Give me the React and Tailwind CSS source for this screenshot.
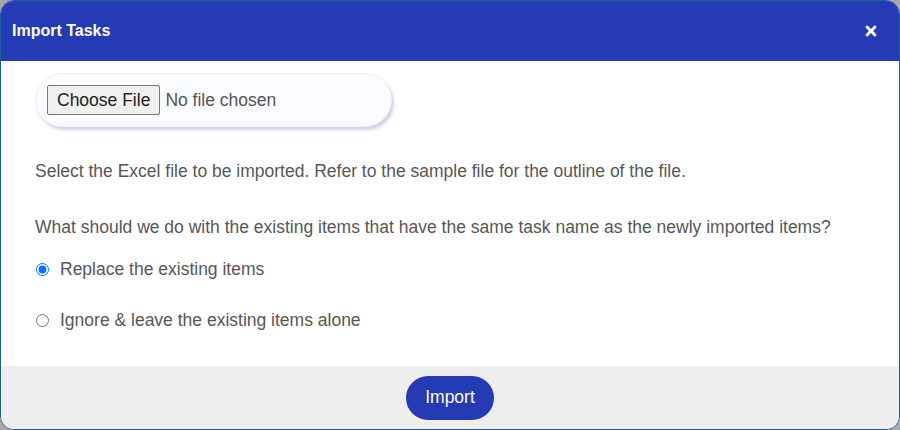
import React from "react";
import { FaTimes } from "react-icons/fa";

const App = () => {
  return (
    <div className="w-[900px] h-[430px] bg-[#a8a8a8]" style={{ fontFamily: '"Liberation Sans", Arial, sans-serif' }}>
      <div className="w-full h-full flex flex-col bg-white rounded-[14px] border border-[#1d5e9c] overflow-hidden">
        {/* header */}
        <div className="h-[60px] shrink-0 bg-[#253ab5] flex items-center justify-between pl-[11px] pr-[20px]">
          <h2 className="text-white text-[16px] font-bold">Import Tasks</h2>
          <button className="text-white">
            <FaTimes size={16} />
          </button>
        </div>

        {/* body */}
        <div className="flex-1 px-[34px] pt-[12px] text-[#575757] text-[17.5px]">
          <div className="w-[357px] h-[54px] rounded-full bg-[#fafbff] border border-[#eef0f8] shadow-[2px_3px_3px_rgba(120,120,200,0.35)] flex items-center pl-[11px]">
            <input type="file" className="text-[17.5px] text-[#555] file:mr-[5px] file:px-[9px] file:py-[1px] file:text-[#222] file:bg-[#efefef] file:border file:border-[#767676] file:rounded-[2px]" />
          </div>

          <p className="mt-[34px] leading-[20px]">
            Select the Excel file to be imported. Refer to the sample file for the outline of the file.
          </p>
          <p className="mt-[36px] leading-[20px]">
            What should we do with the existing items that have the same task name as the newly imported items?
          </p>

          <label className="mt-[20px] flex items-center h-[24px]">
            <input type="radio" name="mode" defaultChecked className="ml-[1px] mr-[11px] w-[13px] h-[13px]" />
            Replace the existing items
          </label>
          <label className="mt-[27px] flex items-center h-[24px]">
            <input type="radio" name="mode" className="ml-[1px] mr-[11px] w-[13px] h-[13px]" />
            Ignore &amp; leave the existing items alone
          </label>
        </div>

        {/* footer */}
        <div className="h-[63px] shrink-0 bg-[#eeeeee] flex items-center justify-center">
          <button className="h-[44px] px-[19px] rounded-full bg-[#253ab5] text-white text-[17.5px]">Import</button>
        </div>
      </div>
    </div>
  );
};

export default App;
